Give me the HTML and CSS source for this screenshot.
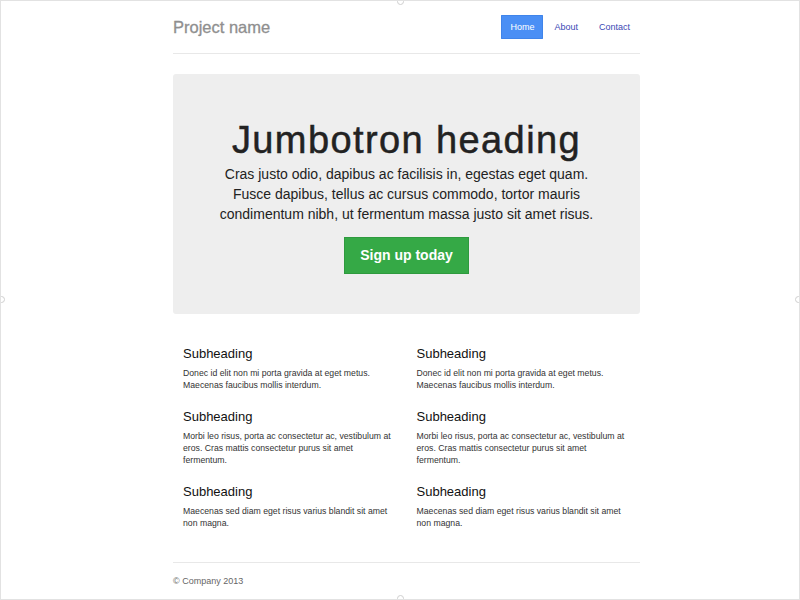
FILE: index.html
```html
<!DOCTYPE html>
<html>
<head>
<meta charset="utf-8">
<link rel="stylesheet" href="styles.css">
</head>
<body>
<div class="frame">
  <div class="container">
    <header class="header">
      <h3 class="brand">Project name</h3>
      <nav class="nav">
        <a class="nav-link active" href="#">Home</a>
        <a class="nav-link" href="#">About</a>
        <a class="nav-link" href="#">Contact</a>
      </nav>
    </header>
    <section class="jumbotron">
      <h1 class="jumbo-title">Jumbotron heading</h1>
      <p class="lead">Cras justo odio, dapibus ac facilisis in, egestas eget quam. Fusce dapibus, tellus ac cursus commodo, tortor mauris condimentum nibh, ut fermentum massa justo sit amet risus.</p>
      <a class="btn-success" href="#">Sign up today</a>
    </section>
    <section class="marketing">
      <div class="col">
        <h4 class="sub">Subheading</h4>
        <p class="txt">Donec id elit non mi porta gravida at eget metus. Maecenas faucibus mollis interdum.</p>
        <h4 class="sub">Subheading</h4>
        <p class="txt">Morbi leo risus, porta ac consectetur ac, vestibulum at eros. Cras mattis consectetur purus sit amet fermentum.</p>
        <h4 class="sub">Subheading</h4>
        <p class="txt">Maecenas sed diam eget risus varius blandit sit amet non magna.</p>
      </div>
      <div class="col">
        <h4 class="sub">Subheading</h4>
        <p class="txt">Donec id elit non mi porta gravida at eget metus. Maecenas faucibus mollis interdum.</p>
        <h4 class="sub">Subheading</h4>
        <p class="txt">Morbi leo risus, porta ac consectetur ac, vestibulum at eros. Cras mattis consectetur purus sit amet fermentum.</p>
        <h4 class="sub">Subheading</h4>
        <p class="txt">Maecenas sed diam eget risus varius blandit sit amet non magna.</p>
      </div>
    </section>
    <footer class="footer">
      <p class="copy">© Company 2013</p>
    </footer>
  </div>
  <span class="handle h-top"></span>
  <span class="handle h-bottom"></span>
  <span class="handle h-left"></span>
  <span class="handle h-right"></span>
</div>
</body>
</html>
```

FILE: styles.css
```css
html, body {
  margin: 0;
  padding: 0;
  background: #fff;
}
body {
  font-family: "Liberation Sans", Arial, Helvetica, sans-serif;
  color: #333;
}
.frame {
  position: relative;
  width: 800px;
  height: 600px;
  box-sizing: border-box;
  border: 1px solid #e2e2e2;
  overflow: hidden;
}
.container {
  width: 467px;
  margin: 0 0 0 172px;
}
.header {
  display: flex;
  align-items: center;
  justify-content: space-between;
  padding: 13px 0 14px 0;
  border-bottom: 1px solid #e8e8e8;
}
.brand {
  margin: 0;
  font-size: 16.5px;
  font-weight: normal;
  color: #8f8f8f;
  line-height: 24px;
  padding-top: 1px;
  -webkit-text-stroke: 0.3px #8f8f8f;
}
.nav {
  display: flex;
  align-items: center;
  margin-right: 3px;
}
.nav-link {
  display: block;
  font-size: 9px;
  line-height: 24px;
  height: 24px;
  padding: 0 7px;
  color: #3a48b5;
  text-decoration: none;
}
.nav-link.active {
  background: #4a8ff5;
  color: #fff;
  padding: 0 9px;
  border-radius: 1px;
  box-shadow: inset 0 0 0 1px #3f84ea;
}
.nav-link:nth-child(2) { margin-left: 4px; }
.nav-link:nth-child(3) { margin-left: 7px; }

.jumbotron {
  margin-top: 20px;
  height: 240px;
  box-sizing: border-box;
  background: #eeeeee;
  border-radius: 3px;
  text-align: center;
  padding: 45px 20px 0;
}
.jumbo-title {
  margin: 0;
  font-size: 38px;
  line-height: 42px;
  font-weight: normal;
  letter-spacing: 1.4px;
  color: #222;
  -webkit-text-stroke: 0.5px #222;
}
.lead {
  width: 376px;
  margin: 3px auto 0;
  font-size: 14px;
  line-height: 20px;
  color: #222;
}
.btn-success {
  display: inline-block;
  margin-top: 13px;
  width: 125px;
  height: 37px;
  box-sizing: border-box;
  line-height: 35px;
  background: #35a946;
  border: 1px solid #2e9a3e;
  color: #fff;
  font-size: 14px;
  font-weight: bold;
  text-decoration: none;
}

.marketing {
  display: grid;
  grid-template-columns: 1fr 1fr;
  padding-top: 32px;
}
.col {
  padding: 0 12px 0 10px;
}
.sub {
  margin: 0 0 5px;
  font-size: 13px;
  line-height: 16px;
  font-weight: normal;
  color: #111;
}
.txt {
  margin: 0 0 18px;
  font-size: 8.7px;
  line-height: 12px;
  color: #333;
}
.footer {
  margin-top: 15px;
  border-top: 1px solid #e8e8e8;
  padding-top: 12px;
}
.copy {
  margin: 0;
  font-size: 9px;
  line-height: 12px;
  color: #666;
}

.handle {
  position: absolute;
  width: 7px;
  height: 7px;
  border: 1px solid #cfcfcf;
  border-radius: 50%;
  background: #fff;
  box-sizing: border-box;
}
.h-top { top: -3px; left: 396px; }
.h-bottom { bottom: -3px; left: 396px; }
.h-left { left: -3px; top: 295px; }
.h-right { right: -3px; top: 295px; }
```
